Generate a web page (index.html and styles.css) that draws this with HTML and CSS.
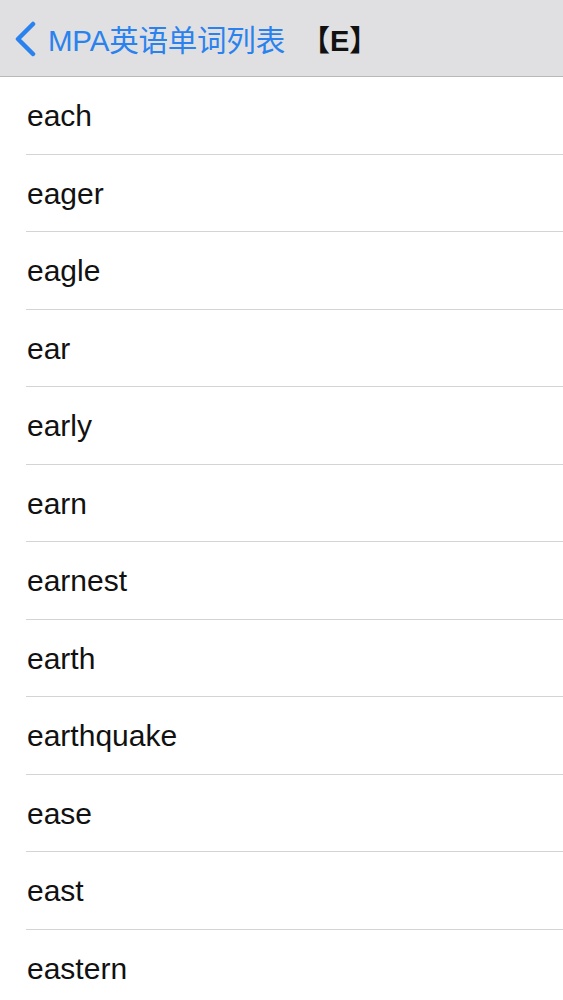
FILE: index.html
```html
<!DOCTYPE html>
<html lang="zh">
<head>
<meta charset="utf-8">
<link rel="stylesheet" href="styles.css">
</head>
<body>
<header class="nav">
  <a class="back">
    <svg class="chev" width="26" height="36" viewBox="0 0 26 36"><polyline points="21,3 6,18 21,33" fill="none" stroke="#2a82ee" stroke-width="4.5" stroke-linecap="round" stroke-linejoin="round"/></svg>
    <span class="back-text">MPA英语单词列表</span>
  </a>
  <span class="title">【E】</span>
</header>
<ul class="list">
  <li class="row">each</li>
  <li class="row">eager</li>
  <li class="row">eagle</li>
  <li class="row">ear</li>
  <li class="row">early</li>
  <li class="row">earn</li>
  <li class="row">earnest</li>
  <li class="row">earth</li>
  <li class="row">earthquake</li>
  <li class="row">ease</li>
  <li class="row">east</li>
  <li class="row">eastern</li>
</ul>
</body>
</html>
```
FILE: styles.css
```css
html, body { margin: 0; padding: 0; background: #fff; }
body { font-family: "Liberation Sans", Arial, "Noto Sans CJK SC", sans-serif; overflow: hidden; }
.nav {
  height: 76px;
  background: #e0e0e2;
  border-bottom: 1px solid #b9b9bb;
  display: flex;
  align-items: center;
  padding-left: 12px;
  box-sizing: content-box;
}
.back { display: flex; align-items: center; color: #2a82ee; }
.chev { display: block; margin-top: 2px; }
.back-text { font-size: 29.5px; margin-left: 10px; letter-spacing: -0.2px; }
.title { font-size: 29px; font-weight: bold; color: #111; margin-left: 16px; }
.list { list-style: none; margin: 0; padding: 0 0 0 26px; }
.row {
  height: 77.5px;
  border-bottom: 1px solid #d4d4d6;
  display: flex;
  align-items: center;
  font-size: 30px;
  color: #111;
  padding-left: 1px;
  padding-top: 2px;
  box-sizing: border-box;
}
```
